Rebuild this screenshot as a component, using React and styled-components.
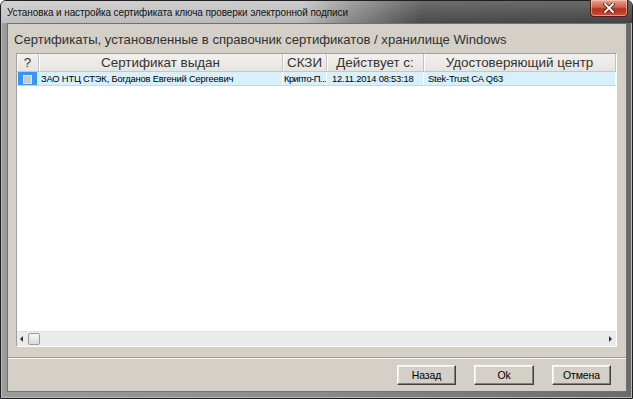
import React from "react";
import styled, { createGlobalStyle } from "styled-components";

const GlobalStyle = createGlobalStyle`
  html, body {
    margin: 0;
    padding: 0;
    background: #ffffff;
  }
  body {
    font-family: "Liberation Sans", Arial, sans-serif;
  }
`;

const Window = styled.div`
  width: 633px;
  height: 399px;
  box-sizing: border-box;
  display: flex;
  flex-direction: column;
  border: 1px solid #1f1f1f;
  border-radius: 6px 6px 0 0;
  background: linear-gradient(to right, #9c9c9c 0, #8a8a8a 50%, #6a6a6a 100%);
  box-shadow: inset 0 0 0 1px #b9b9b9;
`;

const TitleBar = styled.div`
  height: 22px;
  display: flex;
  justify-content: space-between;
  align-items: flex-start;
  padding: 0 4px 0 6px;
  background:
    linear-gradient(to bottom, rgba(255, 255, 255, 0.18), rgba(0, 0, 0, 0.05)),
    linear-gradient(to right, #c9c9c9 0, #c2c2c2 300px, #8d8d8d 350px, #4e4e4e 420px, #474747 100%);
  border-radius: 5px 5px 0 0;
`;

const Title = styled.div`
  font-size: 10px;
  line-height: 23px;
  color: #111;
  white-space: nowrap;
  letter-spacing: -0.1px;
`;

const CloseButton = styled.div`
  width: 38px;
  height: 17px;
  margin-top: -1px;
  box-sizing: border-box;
  display: flex;
  align-items: center;
  justify-content: center;
  border: 1px solid #5a1a12;
  border-top: none;
  border-radius: 0 0 4px 4px;
  background: linear-gradient(to bottom, #e8a493 0, #d1604a 45%, #b5311d 55%, #c8503a 100%);
  box-shadow: inset 0 0 0 1px rgba(255, 220, 210, 0.5);
`;

const Client = styled.div`
  flex: 1;
  display: flex;
  flex-direction: column;
  margin: 0 5px 6px 6px;
  background: #d4d0c8;
  border: 1px solid #707070;
  min-height: 0;
`;

const Heading = styled.div`
  font-size: 13.1px;
  color: #303030;
  padding: 7px 0 0 6px;
  height: 22px;
  line-height: 18px;
  white-space: nowrap;
`;

const TablePanel = styled.div`
  flex: 1;
  display: flex;
  flex-direction: column;
  margin: 0 9px 0 8px;
  background: #ffffff;
  border: 1px solid #a0a0a0;
  border-right-color: #ffffff;
  border-bottom-color: #ffffff;
  min-height: 0;
`;

const Row = styled.div`
  display: grid;
  grid-template-columns: 22px 244px 44px 97px 1fr;
  height: ${(p) => p.$height}px;
  background: ${(p) => (p.$header ? "linear-gradient(to bottom, #f2f1ee, #e6e4df)" : "#d9effc")};
  border-bottom: 1px solid ${(p) => (p.$header ? "#c8c6c0" : "#b9dcf3")};
`;

const HeaderCell = styled.div`
  font-size: 13.4px;
  color: #333;
  text-align: center;
  line-height: 17px;
  border-right: 1px solid #c4c2bc;
  box-shadow: inset 1px 0 0 #ffffff;
  white-space: nowrap;
  overflow: hidden;
`;

const Cell = styled.div`
  font-size: 9.4px;
  letter-spacing: ${(p) => (p.$squeeze ? "-0.55px" : "-0.2px")};
  color: #000;
  line-height: 13px;
  padding-left: ${(p) => p.$pad ?? 3}px;
  border-right: 1px solid #ffffff;
  white-space: nowrap;
  overflow: hidden;
`;

const CheckCell = styled.div`
  display: flex;
  align-items: center;
  justify-content: center;
  background: #3597fb;
  margin: 0 2px 0 1px;
`;

const CheckBox = styled.div`
  width: 9px;
  height: 9px;
  box-sizing: border-box;
  background: #c9c9c9;
  border: 1px solid #e3e3e3;
  margin-top: 1px;
`;

const Spacer = styled.div`
  flex: 1;
`;

const ScrollBar = styled.div`
  height: 14px;
  display: flex;
  align-items: center;
  justify-content: space-between;
  padding: 0 4px 0 3px;
  background: #ebebeb;
  border-top: 1px solid #e1e1e1;
`;

const ScrollLeft = styled.div`
  display: flex;
  align-items: center;
  gap: 5px;
`;

const Arrow = styled.div`
  width: 0;
  height: 0;
  border-top: 3px solid transparent;
  border-bottom: 3px solid transparent;
  ${(p) => (p.$dir === "left" ? "border-right: 3px solid #333;" : "border-left: 3px solid #333;")}
`;

const Thumb = styled.div`
  width: 12px;
  height: 12px;
  box-sizing: border-box;
  border: 1px solid #9c9c9c;
  border-radius: 2px;
  background: linear-gradient(to bottom, #f7f7f7, #d9d9d9);
`;

const Separator = styled.div`
  margin-top: 10px;
  border-top: 1px solid #a09d94;
  border-bottom: 1px solid #f4f3ef;
`;

const ButtonBar = styled.div`
  display: flex;
  justify-content: flex-end;
  gap: 18px;
  padding: 6px 15px 0 0;
  height: 26px;
`;

const Button = styled.button`
  width: ${(p) => p.$width}px;
  height: 20px;
  padding: 0;
  font-family: "Liberation Sans", Arial, sans-serif;
  font-size: 10.5px;
  letter-spacing: -0.1px;
  color: #000;
  background: #d4d0c8;
  border: 1px solid;
  border-color: #ffffff #404040 #404040 #ffffff;
  box-shadow: inset -1px -1px 0 #808080, inset 1px 1px 0 #eeeeee;
`;

const columns = ["?", "Сертификат выдан", "СКЗИ", "Действует с:", "Удостоверяющий центр"];

const App = () => {
  return (
    <>
      <GlobalStyle />
      <Window>
        <TitleBar>
          <Title>Установка и настройка сертификата ключа проверки электронной подписи</Title>
          <CloseButton>
            <svg width="12" height="10" viewBox="0 0 12 10">
              <path
                d="M2 1 L10 9 M10 1 L2 9"
                stroke="#4a2018"
                strokeWidth="3.4"
                strokeLinecap="square"
              />
              <path
                d="M2 1 L10 9 M10 1 L2 9"
                stroke="#ffffff"
                strokeWidth="1.8"
                strokeLinecap="square"
              />
            </svg>
          </CloseButton>
        </TitleBar>
        <Client>
          <Heading>
            Сертификаты, установленные в справочник сертификатов / хранилище Windows
          </Heading>
          <TablePanel>
            <Row $header $height={17}>
              {columns.map((c) => (
                <HeaderCell key={c}>{c}</HeaderCell>
              ))}
            </Row>
            <Row $height={13}>
              <CheckCell>
                <CheckBox />
              </CheckCell>
              <Cell $pad={2}>ЗАО НТЦ СТЭК, Богданов Евгений Сергеевич</Cell>
              <Cell $pad={1} $squeeze>
                Крипто-П...
              </Cell>
              <Cell $pad={5}>12.11.2014 08:53:18</Cell>
              <Cell $pad={4}>Stek-Trust CA Q63</Cell>
            </Row>
            <Spacer />
            <ScrollBar>
              <ScrollLeft>
                <Arrow $dir="left" />
                <Thumb />
              </ScrollLeft>
              <Arrow $dir="right" />
            </ScrollBar>
          </TablePanel>
          <Separator />
          <ButtonBar>
            <Button $width={59}>Назад</Button>
            <Button $width={60}>Ok</Button>
            <Button $width={59}>Отмена</Button>
          </ButtonBar>
        </Client>
      </Window>
    </>
  );
};

export default App;
